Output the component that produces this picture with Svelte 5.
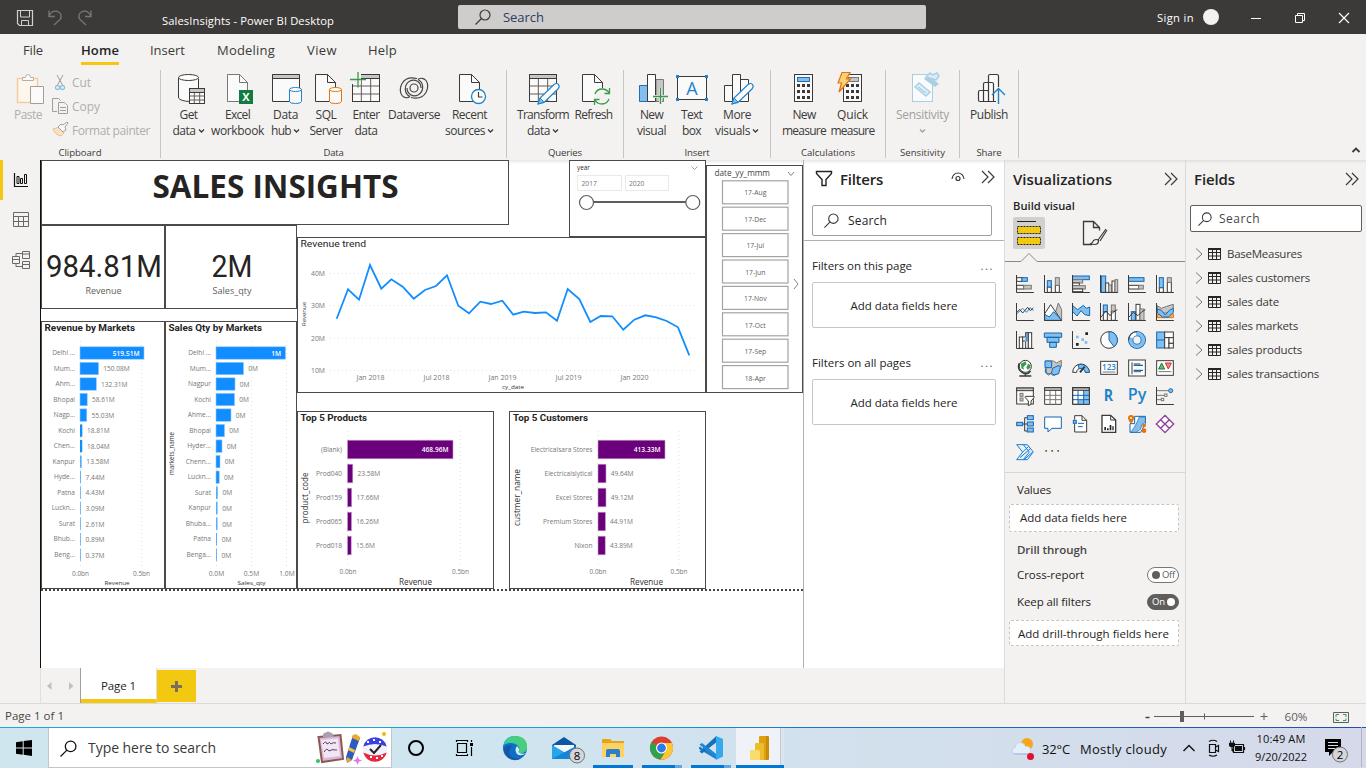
<script>
  // Spreads the letters of a label so that it takes exactly the given width.
  function fit(node, width) {
    const n = node.textContent.length;
    const natural = node.getBoundingClientRect().width;
    if (n && width) node.style.letterSpacing = `${(width - natural) / n}px`;
  }

  const page = (x, y, w = 21, h = 28, c = '#3b3a39') =>
    `<path d="M${x + .5} ${y + .5}h${w - 9}l8 8v${h - 9}h-${w - 1}z" fill="#fafafa" stroke="${c}"/><path d="M${x + w - 8.5} ${y + .5}v8h8" fill="none" stroke="${c}"/>`;
  const cyl = (x, y, w, h, c) =>
    `<path d="M${x + .5} ${y + 2.5}v${h - 5}q0 2 ${(w - 1) / 2} 2t${(w - 1) / 2} -2v-${h - 5}" fill="#fafafa" stroke="${c}"/><ellipse cx="${x + w / 2}" cy="${y + 2.5}" rx="${(w - 1) / 2}" ry="2" fill="#fff" stroke="${c}"/>`;
  const table = (x, y, w, h, c = '#3b3a39') =>
    `<rect x="${x + .5}" y="${y + .5}" width="${w - 1}" height="${h - 1}" fill="#fafafa"/><path d="M${x + w / 3} ${y + 4}v${h - 4}M${x + 2 * w / 3} ${y + 4}v${h - 4}M${x} ${y + 4 + (h - 4) / 3}h${w}M${x} ${y + 4 + 2 * (h - 4) / 3}h${w}" stroke="#605e5c" fill="none"/><rect x="${x + .5}" y="${y + .5}" width="${w - 1}" height="4" fill="#c8c6c4" stroke="${c}"/><rect x="${x + .5}" y="${y + .5}" width="${w - 1}" height="${h - 1}" fill="none" stroke="${c}"/>`;
  const pencil = (x, y) =>
    `<path d="M${x} ${y}l2-6 14-13.500q3-2 4.500 0t-.5 4.500l-14 13.500z" fill="#fafafa" stroke="#1f83c9" stroke-width="1.200"/><path d="M${x} ${y}l2-6 4 4z" fill="#83beec" stroke="#1f83c9"/>`;
  const dots = (x, y) => [0, 1, 2].map(r => [0, 1, 2].map(c => `<rect x="${x + c * 5}" y="${y + r * 6}" width="3" height="3" fill="#3b3a39"/>`).join('')).join('');

  const groups = [
    { name: 'Data', w: 346, pad: 6, x: 161, lw: 20, items: [
      { w: 43, l: ['Get', 18], m: ['data', 23], down: 1, icon: `<path d="M178.500 78v20q2 3 11 3.500v-13h9v-10" fill="#fafafa" stroke="#3b3a39"/><ellipse cx="188.500" cy="77.500" rx="10" ry="3" fill="#fff" stroke="#3b3a39"/>` + table(189, 88, 16, 16) },
      { w: 55, l: ['Excel', 25], m: ['workbook', 53], icon: page(227, 74, 21, 28, '#797775') + `<rect x="239" y="90" width="14" height="14" fill="#107c41"/><text x="246" y="101" text-anchor="middle" font-family="Open Sans" font-weight="700" font-size="11" fill="#fff">X</text>` },
      { w: 41, l: ['Data', 25], m: ['hub', 20], down: 1, icon: `<path d="M272.500 74.500h27v27h-27z" fill="#fafafa" stroke="#3b3a39"/><path d="M272.500 74.500h27v4h-27z" fill="#c8c6c4" stroke="#3b3a39"/>` + cyl(289, 87, 13, 17, '#1f83c9') },
      { w: 40, l: ['SQL', 21], m: ['Server', 33], icon: page(315, 74) + cyl(329, 87, 13, 17, '#e3740b') },
      { w: 40, l: ['Enter', 27], m: ['data', 23], icon: table(352, 74, 28, 28) + `<path d="M350 72h11v12h-11z" fill="#f3f2f1"/><path d="M350 79.500h16M358 72v15.500" stroke="#3a9a4b" stroke-width="1.300"/>` },
      { w: 56, l: ['Dataverse', 52], icon: `<g fill="none" stroke="#484644" stroke-width="1.200"><circle cx="414" cy="88" r="4"/><path d="M417 78.500c-6-1.500-12 0-15 5-2.500 4.500-2 9.500 0 12 2 2.500 5.500 3 8 1M411 97.500c6 1.500 12 0 15-5 2.500-4.500 2-9.500 0-12-2-2.500-5.500-3-8-1"/><path d="M410 96.500c-6-3-6.500-12 0-15.500 5-2.500 11 1 11 7M418 79.500c6 3 6.500 12 0 15.500-5 2.500-11-1-11-7"/></g>` },
      { w: 55, l: ['Recent', 35], m: ['sources', 40], down: 1, icon: page(459, 74) + `<circle cx="478.500" cy="96.500" r="7" fill="#fff" stroke="#1f83c9" stroke-width="1.300"/><path d="M478.500 92v5h4" fill="none" stroke="#3b3a39" stroke-width="1.200"/>` }
    ] },
    { name: 'Queries', w: 117, pad: 9, x: 507, lw: 34, items: [
      { w: 54, l: ['Transform', 52], m: ['data', 23], down: 1, icon: table(529, 74, 28, 28) + pencil(538, 104) },
      { w: 47, l: ['Refresh', 38], icon: page(582, 74) + `<circle cx="602" cy="96.500" r="8.500" fill="#f3f2f1"/><path d="M595 94q2-5 7-5t7 4m.5-5v5.500h-5M609 99q-2 5-7 5t-7-4m-.5 5v-5.500h5" fill="none" stroke="#3a9a4b" stroke-width="1.300"/>` }
    ] },
    { name: 'Insert', w: 147, pad: 7, x: 624, lw: 25, items: [
      { w: 41, l: ['New', 23], m: ['visual', 29], icon: `<path d="M656 79.500h7.500v22H656z" fill="#c8c6c4" stroke="#797775"/><path d="M639.500 85.500h8v16h-8z" fill="#83beec" stroke="#1f6fb5"/><path d="M647.500 74.500h8v27h-8z" fill="#fff" stroke="#3b3a39"/><path d="M660.500 88v16M653 96.500h15" stroke="#f3f2f1" stroke-width="3"/><path d="M660.500 88v16M653 96.500h15" stroke="#3a9a4b" stroke-width="1.400"/>` },
      { w: 39, l: ['Text', 21], m: ['box', 19], icon: `<rect x="677.500" y="76.500" width="29" height="23" fill="#fafafa" stroke="#3b3a39"/><path d="M676 75h3v3h-3zM705 75h3v3h-3zM676 98h3v3h-3zM705 98h3v3h-3z" fill="#1f83c9"/><text x="692" y="95" text-anchor="middle" font-family="Open Sans" font-size="18" fill="#1f83c9">A</text>` },
      { w: 52, l: ['More', 28], m: ['visuals', 35], down: 1, icon: `<g fill="#fafafa" stroke="#3b3a39"><path d="M724.500 85.500h8v16h-8zM732.500 74.500h8v27h-8zM740.500 79.500h8v22h-8z"/></g>` + pencil(732, 104) }
    ] },
    { name: 'Calculations', w: 115, pad: 9, x: 771, lw: 54, items: [
      { w: 48, l: ['New', 23], m: ['measure', 44], icon: `<rect x="794.500" y="74.500" width="18" height="27" fill="#fafafa" stroke="#3b3a39"/><rect x="797.500" y="77.500" width="12" height="4" fill="#83beec" stroke="#1f6fb5"/>` + dots(797, 84) },
      { w: 49, l: ['Quick', 31], m: ['measure', 44], icon: `<rect x="843.500" y="74.500" width="18" height="27" fill="#fafafa" stroke="#3b3a39"/><rect x="848.500" y="77.500" width="10" height="4" fill="#c8c6c4" stroke="#797775"/>` + dots(846, 84) + `<path d="M842 72.500h8l-3.500 6.500h4L839 92l2.500-9H838z" fill="#fbd17b" stroke="#e3740b" stroke-width="1.200"/>` }
    ] },
    { name: 'Sensitivity', w: 74, pad: 0, x: 886, lw: 45, items: [
      { w: 73, off: 1, l: ['Sensitivity', 53], m: ['', 0], down: 1, icon: `<rect x="912.500" y="74.500" width="20" height="27" fill="#fafafa" stroke="#a8cfe4"/><path d="M915 87l4-4 11 9-4 4z" fill="#e3f0f7" stroke="#a8cfe4" stroke-width="1.500"/><path d="M918 87l8 6" stroke="#a8cfe4" stroke-width="1.500"/><path d="M924 79l4-4 11 9-4 3z" fill="#a8cfe4"/><path d="M926 77l4-4 3 2 4-2 2 3-3 4z" fill="#dcecf4" stroke="#a8cfe4" stroke-width="1.500"/>` }
    ] },
    { name: 'Share', w: 59, pad: 0, x: 960, lw: 25, items: [
      { w: 58, l: ['Publish', 38], icon: `<g fill="#fafafa" stroke="#3b3a39" stroke-width="1.200"><path d="M988.500 101.500V76q0-1.500 1.500-1.500h7q1.500 0 1.500 1.500v25.500zM983.500 101.500V84q0-1.500 1.500-1.500h7q1.500 0 1.500 1.500v17.500zM978.500 100V92q0-1.500 1.500-1.500h7q1.500 0 1.500 1.500v9.500h-8.500q-1.500 0-1.500-1.500z"/></g><path d="M998.500 87v17" stroke="#f3f2f1" stroke-width="5"/><path d="M998.500 104V88.500M992 95l6.500-6.500 6.500 6.500" fill="none" stroke="#1f83c9" stroke-width="1.400"/>` }
    ] }
  ];
  for (const g of groups) {
    let x = g.x + g.pad;
    for (const i of g.items) { i.x = x; x += i.w; }
  }

  const menu = [['File', 20, 23], ['Home', 38, 38], ['Insert', 35, 31], ['Modeling', 58, 32], ['View', 30, 32], ['Help', 29, 31]];

  const market = [['Delhi ...', 519.51], ['Mum...', 150.08], ['Ahm...', 132.31], ['Bhopal', 58.61], ['Nagp...', 55.03], ['Kochi', 18.81], ['Chen...', 18.04], ['Kanpur', 13.58], ['Hyde...', 7.44], ['Patna', 4.43], ['Luckn...', 3.09], ['Surat', 2.61], ['Bhub...', 0.89], ['Beng...', 0.37]]
    .map(([n, v]) => ({ n, v: v + 'M', w: Math.max(.8, v * .1232) }));
  const qty = [['Delhi ...', 69.5], ['Mum...', 27.5], ['Nagpur', 19], ['Kochi', 18.5], ['Ahme...', 15], ['Bhopal', 8.5], ['Hyder...', 6], ['Chenn...', 4], ['Luckn...', 3.2], ['Surat', 1.8], ['Kanpur', 1.6], ['Bhuba...', 1.5], ['Patna', 1], ['Benga...', .9]]
    .map(([n, w], i) => ({ n, w, v: i ? '0M' : '1M' }));
  const products = [['(Blank)', '468.96M', 105.5], ['Prod040', '23.58M', 5.3], ['Prod159', '17.66M', 4.2], ['Prod065', '16.26M', 4], ['Prod018', '15.6M', 3.7]].map(([n, v, w]) => ({ n, v, w }));
  const customers = [['Electricalsara Stores', '413.33M', 67], ['Electricalslytical', '49.64M', 8], ['Excel Stores', '49.12M', 8], ['Premium Stores', '44.91M', 7.4], ['Nixon', '43.89M', 7.2]].map(([n, v, w]) => ({ n, v, w }));
  const trend = '336.7,318.7 348,289.3 359,299.7 370,265 381.3,288.7 391.3,279.3 402.7,286.7 413.7,298.7 425,290 436,286 447,275.3 458.3,305.7 469,313.3 480.3,301.7 491,304 502.3,300.7 513.3,314.7 523.7,311.7 535,313 546,312.3 557,320.7 567.7,289 579.3,299 590.3,322 600.7,316 612.3,316.3 623.3,329.7 634.3,319.7 645.3,315.3 656.3,317.3 666.7,321 678,327.3 689.3,355.3';
  const months = ['17-Aug', '17-Dec', '17-Jul', '17-Jun', '17-Nov', '17-Oct', '17-Sep', '18-Apr'];

  const K = '#3b3a39', B = '#83beec', D = '#1267b4', G = '#c8c6c4', S = '#797775';
  const r = (x, y, w, h, f, s) => `<rect x="${x}" y="${y}" width="${w}" height="${h}" fill="${f}" stroke="${s}"/>`;
  const axis = `<path d="M1.500 0v52.500h52" stroke="${K}"/>`;
  const tbl = `<path d="M2 2h50v50H2z" fill="#fff" stroke="${K}"/>`;
  const vizIcons = [
    r(2, 8, 16, 11, '#fff', K) + r(18, 8, 16, 11, B, D) + r(2, 31, 21, 11, '#fff', K) + r(23, 31, 23, 11, G, S) + axis,
    r(10, 36, 12, 16, '#fff', K) + r(10, 17, 12, 19, B, D) + r(34, 31, 12, 21, '#fff', K) + r(34, 8, 12, 23, G, S) + axis,
    r(2, 3, 50, 11, B, D) + r(2, 14, 30, 10, G, S) + r(2, 24, 20, 8, '#fff', K) + r(2, 32, 38, 10, G, S) + r(2, 42, 30, 8, '#fff', K) + axis,
    r(4, 3, 13, 49, B, D) + r(17, 24, 9, 28, '#fff', K) + r(26, 30, 10, 22, G, S) + r(36, 18, 9, 34, '#fff', K) + r(45, 14, 8, 38, G, S) + axis,
    r(2, 8, 46, 11, B, D) + r(2, 31, 30, 11, '#fff', K) + r(32, 31, 14, 11, G, S) + axis,
    r(10, 38, 12, 14, '#fff', K) + r(10, 8, 12, 30, B, D) + r(34, 22, 12, 30, '#fff', K) + r(34, 8, 12, 14, G, S) + axis,
    `<path d="M3 32l17-16 12 12 10-14 11 9" stroke="#2a8ad0"/><path d="M3 28l8-9 9 11 15-17 8 10 9-8" stroke="${K}"/>` + axis,
    `<path d="M28 50L43 0l10 20v30z" fill="${G}" stroke="${S}"/><path d="M2 32L20 5l32 46H2z" fill="#fff" stroke="${K}"/><path d="M2 52V34l14 8 13-16 24 26z" fill="${B}" stroke="${D}"/>` + axis,
    `<path d="M2 8l15 12L34 7l9 9 10-4v26l-15-3-11-12-12 16L2 26z" fill="${B}" stroke="${D}"/>` + axis,
    r(10, 26, 12, 26, '#fff', K) + r(10, 6, 12, 20, B, D) + r(34, 24, 12, 28, '#fff', K) + r(34, 6, 12, 18, G, S) + `<path d="M3 42l15-18 12 14 9-10 13-8" stroke="${K}" stroke-width="3"/>` + axis,
    r(10, 26, 12, 26, B, D) + r(24, 4, 12, 48, '#fff', K) + r(36, 18, 12, 34, G, S) + `<path d="M3 42l13-14 14 10 12-12 10-6" stroke="${K}" stroke-width="3"/>` + axis,
    `<path d="M4 8l12 8 16-6 20-6v14L38 30H18L4 20z" fill="${G}" stroke="${S}"/><path d="M4 34h12l8 8h12l8-10h8v12H4z" fill="#fbb35a" stroke="#e3740b"/><path d="M4 18l12 4 12 14 12-14 12-6v12L38 42H20L4 30z" fill="${B}" stroke="${D}"/>` + axis,
    r(10, 18, 10, 34, '#fff', K) + r(20, 18, 9, 12, '#fff', K) + r(29, 5, 8, 47, '#fff', K) + r(37, 5, 10, 47, '#fff', K) + `<path d="M26 18h7v14h-7z" fill="${B}"/><path d="M33 5v26" stroke="${D}"/>` + axis,
    `<g fill="${B}" stroke="${D}"><path d="M1 6h52v13H1zM9 19h36v15H9zM17 34h20v15H17z"/></g>`,
    `<path d="M12 14h8v8h-8zM38 30h8v8h-8zM28 22h8v8h-8z" fill="${B}"/><path d="M40 4h8v8h-8zM12 36h8v8h-8z" fill="#222"/>` + axis,
    `<circle cx="27" cy="27" r="25" fill="#fff" stroke="${K}"/><path d="M27 2a25 25 0 0 1 15 45L27 27z" fill="${B}" stroke="${D}"/>`,
    `<circle cx="27" cy="27" r="19" fill="none" stroke="${D}" stroke-width="16"/><circle cx="27" cy="27" r="19" fill="none" stroke="${B}" stroke-width="11"/><path d="M10 20a19 19 0 0 1 14-12" stroke="#fff" stroke-width="10"/><path d="M2 27A25 25 0 0 1 27 2" stroke="${K}"/>`,
    r(2, 3, 24, 48, B, D) + `<path d="M2 27h24" stroke="${D}"/>` + r(26, 3, 26, 17, '#fff', K) + r(26, 20, 13, 31, '#fff', K) + r(39, 20, 13, 17, '#fff', K) + r(39, 37, 13, 14, '#fff', K),
    `<circle cx="28" cy="22" r="18" fill="#fff" stroke="${K}"/><path d="M15 14l13-7 4 8-10 9 2 8-8-4zM36 14l7 4v8l-8 6-4-6z" fill="#3a9a4b"/><path d="M10 12q-8 18 8 28t26-4M28 44v7M10 51h36" stroke="${K}" stroke-width="4"/>`,
    `<path d="M4 6h24l10 6 14-8v18l-6 4-4 18-14 6-8-6H8z" fill="${G}" stroke="${S}"/><path d="M3 6h20v20H3zM26 28l16-8 8 2-6 22-14 4-8-6z" fill="${B}" stroke="${D}"/><path d="M4 28v12l10 8 8-6" stroke="${D}"/>`,
    `<path d="M2 40a25 25 0 0 1 50 0H40a13 13 0 0 0-26 0z" fill="#fff" stroke="${K}"/><path d="M18 18a25 25 0 0 1 34 22H40a13 13 0 0 0-18-11z" fill="${B}" stroke="${D}"/><path d="M24 40l14-17" stroke="${K}" stroke-width="6"/>`,
    r(2, 7, 50, 39, '#fff', K) + `<path d="M8 39h38" stroke="${S}"/><text x="27" y="34" text-anchor="middle" font-family="Open Sans" font-weight="600" font-size="26" textLength="42" lengthAdjust="spacingAndGlyphs" fill="#1f83c9">123</text>`,
    r(2, 3, 50, 48, '#fff', K) + `<path d="M12 10v36" stroke="${K}"/><path d="M17 15h20M17 38h22" stroke="${S}" stroke-width="4"/><path d="M17 19h28M17 34h28" stroke="${D}" stroke-width="4"/>`,
    r(2, 5, 50, 44, '#fff', K) + `<path d="M8 30l9-18 9 18z" fill="#6ab77a" stroke="#1e7b34"/><path d="M28 12h18l-9 18z" fill="#f08a8a" stroke="#d92c2c"/><path d="M8 38h38" stroke="${S}"/>`,
    r(2, 3, 50, 48, '#fff', K) + r(2, 3, 50, 8, G, K) + r(12, 19, 9, 9, G, S) + r(12, 33, 9, 9, G, S) + `<path d="M28 28h26v4l-9 10v10l-8 4V42l-9-10z" fill="#fff" stroke="${K}"/>`,
    tbl + `<path d="M18 10v42M35 10v42M2 25h50M2 38h50" stroke="${S}"/>` + r(2, 2, 50, 8, G, K),
    tbl + `<path d="M35 10h17v42H18V38h17z" fill="${B}"/><path d="M18 10v42M35 10v42M2 25h50M2 38h50" stroke="${D}"/>` + r(2, 2, 50, 8, G, K) + `<path d="M2 2h50v50H2z" stroke="${K}"/>`,
    `<text x="25" y="43" text-anchor="middle" font-family="Open Sans" font-weight="700" font-size="46" textLength="28" lengthAdjust="spacingAndGlyphs" fill="#1f83c9">R</text>`,
    `<text x="27" y="39" text-anchor="middle" font-family="Open Sans" font-weight="600" font-size="46" textLength="56" lengthAdjust="spacingAndGlyphs" fill="#1f83c9">Py</text>`,
    `<path d="M2 11h36M2 25h24M2 38h14" stroke="${S}"/><circle cx="44" cy="11" r="6" fill="${B}" stroke="${D}"/>` + r(26, 21, 7, 7, '#fff', S) + r(16, 34, 7, 7, '#fff', S) + axis,
    `<path d="M18 27h16M26 8v40M26 8h8M26 48h8" stroke="${K}"/>` + r(2, 22, 18, 10, B, D) + r(34, 2, 18, 12, B, D) + r(34, 21, 18, 12, B, D) + r(34, 39, 18, 12, B, D),
    `<path d="M2 6h50v34H24L12 51V40H2z" fill="#fff" stroke="${D}"/>`,
    `<path d="M8 14V2h22l14 14v35H8V26" fill="#fff" stroke="${K}"/><path d="M30 2v14h14" stroke="${K}"/><path d="M18 25h18M18 35h14" stroke="${D}"/>` + r(4, 16, 9, 9, B, D),
    `<path d="M6 1h26l15 14v37H6z" fill="#fff" stroke="${K}" stroke-width="4"/><path d="M32 1v14h15" stroke="${K}"/><path d="M13 36h5v10h-5zM21 40h5v6h-5zM29 30h5v16h-5zM37 34h4v12h-4z" fill="#222"/>`,
    `<path d="M6 26h14V4h32v22L38 52H6z" fill="#fff" stroke="${D}"/><path d="M34 6h18v16L42 28l-4 14-14 10H8l10-14 8-14z" fill="${B}" stroke="${D}" stroke-width="2"/><path d="M9 0q10 0 9 10-1 8-9 16Q1 18 0 10 0 0 9 0z" fill="#e3740b"/><circle cx="9" cy="9" r="3" fill="#fff"/><circle cx="48" cy="47" r="7" fill="#e3740b"/><path d="M43 27h10v9h-10z" fill="#e3740b"/>`,
    `<g fill="#fff" stroke="#8f3f9e"><path d="M27 1l13 13-13 13L14 14zM14 14l13 13-13 13L1 27zM40 14l13 13-13 13-13-13zM27 27l13 13-13 13-13-13z" stroke-width="4"/></g>`,
    `<path d="M2 5h32l18 22-18 23H2l18-23z" fill="#e6f1fb" stroke="#1a7bd0"/><path d="M22 5l18 22-18 23M20 27L38 10M12 44L44 16M24 50l25-22" stroke="#1a7bd0"/>`,
    `<path d="M4 21h5v5H4zM22 21h5v5h-5zM40 21h5v5h-5z" fill="#7d5a2c"/>`
  ];
  const fields = [['BaseMeasures', 75], ['sales customers', 83], ['sales date', 52], ['sales markets', 71], ['sales products', 75], ['sales transactions', 92]];

  const petals = '<circle cx="661.500" cy="748" r="11.500" fill="#de3f31"/><path d="M651.500 742.200A11.500 11.500 0 0 0 660 759.400l6.500-8.900z" fill="#2da24d"/><path d="M661.500 743H671.800A11.500 11.500 0 0 1 660.500 759.500L666.500 750z" fill="#fcc832"/><circle cx="661.500" cy="748" r="5.500" fill="#fff"/><circle cx="661.500" cy="748" r="4.400" fill="#2f78e8"/>';
</script>

{#snippet T(text, w)}<span class="t" use:fit={w}>{text}</span>{/snippet}

{#snippet ico(x, y, w, h, markup)}<svg class="ico" width={w} height={h} viewBox="{x} {y} {w} {h}" fill="none">{@html markup}</svg>{/snippet}

{#snippet st(x, y, text, size, w, anchor = 'start', fill = '#777', weight = 400, font = 'Open Sans')}
  <text {x} {y} font-size={size} textLength={w || undefined} lengthAdjust="spacingAndGlyphs" text-anchor={anchor} {fill} font-weight={weight} font-family="{font}, Open Sans, sans-serif">{text}</text>
{/snippet}

{#snippet bars(rows, x0, y0, pitch, h, fill, edge, labelX)}
  {#each rows as row, i}
    {@const cy = y0 + i * pitch}
    <rect x={x0} y={cy - h / 2} width={row.w} height={h} {fill} fill-opacity={row.w < 2 ? .7 : 1} stroke={row.w < 2.6 ? 'none' : edge} stroke-width=".6" />
    {@render st(labelX, cy + 2, row.n, 6.6, 0, 'end', '#777')}
    {#if i === 0}
      {@render st(x0 + row.w - 4.5, cy + 2.8, row.v, 6.6, 0, 'end', '#fff', 600)}
    {:else}
      {@render st(x0 + row.w + 4.7, cy + 2.8, row.v, 6.6, 0, 'start', '#777')}
    {/if}
  {/each}
{/snippet}

{#snippet visual(x, y, w, h, body)}
  <svg class="visual" style="left:{x - 40}px;top:{y - 160}px" width={w} height={h} viewBox="{x} {y} {w} {h}">
    <rect x={x + .5} y={y + .5} width={w - 1} height={h - 1} fill="#fff" stroke="#4b4a49" />
    {@render body()}
  </svg>
{/snippet}

{#snippet titleV()}{@render st(152.5, 198, 'SALES INSIGHTS', 32, 246, 'start', '#252423', 700)}{/snippet}
{#snippet revCard()}
  {@render st(46, 277, '984.81M', 31.5, 116, 'start', '#252423', 400, 'Roboto')}
  {@render st(103.5, 294, 'Revenue', 9.2, 36, 'middle', '#605e5c')}
{/snippet}
{#snippet qtyCard()}
  {@render st(211.5, 277, '2M', 31.5, 41, 'start', '#252423', 400, 'Roboto')}
  {@render st(232, 294, 'Sales_qty', 9.2, 39, 'middle', '#605e5c')}
{/snippet}
{#snippet marketV()}
  {@render st(44.5, 331, 'Revenue by Markets', 9.6, 90.5, 'start', '#252423', 700, 'Roboto')}
  <path d="M80.500 341v226M141.500 341v226" class="dots" />
  {@render bars(market, 80, 353, 15.52, 12.4, '#118dff', '#8ec9ff', 75)}
  {@render st(80.5, 576, '0.0bn', 6.6, 17, 'middle')}
  {@render st(141.5, 576, '0.5bn', 6.6, 17, 'middle')}
  {@render st(117, 585, 'Revenue', 6, 25, 'middle', '#333', 500)}
{/snippet}
{#snippet qtyV()}
  {@render st(168.5, 331, 'Sales Qty by Markets', 9.6, 93.5, 'start', '#252423', 700, 'Roboto')}
  <path d="M216.500 341v226M251.500 341v226M286.500 341v226" class="dots" />
  {@render bars(qty, 216, 353, 15.52, 12.4, '#118dff', '#8ec9ff', 211)}
  {@render st(216.5, 576, '0.0M', 6.6, 15.5, 'middle')}
  {@render st(251.5, 576, '0.5M', 6.6, 15.5, 'middle')}
  {@render st(287, 576, '1.0M', 6.6, 15.5, 'middle')}
  {@render st(251.5, 585, 'Sales_qty', 6, 28, 'middle', '#333', 500)}
  <g transform="rotate(-90 174 453.500)">{@render st(174, 453.5, 'markets_name', 6.2, 43, 'middle', '#333', 500)}</g>
{/snippet}
{#snippet trendV()}
  {@render st(300.5, 247, 'Revenue trend', 9.6, 65.5, 'start', '#252423', 400, 'Roboto')}
  <path d="M330 273.500h367M330 305.700h367M330 338.300h367M330 370.500h367" class="dots" />
  <polyline points={trend} fill="none" stroke="#118dff" stroke-width="1.800" />
  {#each ['40M', '30M', '20M', '10M'] as l, i}{@render st(325, 276 + i * 32.4, l, 6.8, 14, 'end')}{/each}
  {#each ['Jan 2018', 'Jul 2018', 'Jan 2019', 'Jul 2019', 'Jan 2020'] as l, i}{@render st(370.5 + i * 66, 380, l, 6.8, i % 2 ? 26 : 28, 'middle')}{/each}
  {@render st(513, 389, 'cy_date', 6, 22, 'middle', '#333', 500)}
  <g transform="rotate(-90 306 314)">{@render st(306, 314, 'Revenue', 6, 24, 'middle', '#444', 500)}</g>
{/snippet}
{#snippet yearV()}
  {@render st(577, 169.5, 'year', 6.2, 13, 'start', '#333', 500)}
  <path d="M691.500 166.500l3 3 3-3" fill="none" stroke="#888" stroke-width=".8" />
  <rect x="577.500" y="175.500" width="44" height="15" fill="#fff" stroke="#eae9e8" /><rect x="625.500" y="175.500" width="43" height="15" fill="#fff" stroke="#eae9e8" />
  {@render st(581.5, 186, '2017', 7, 15.5)}{@render st(629, 186, '2020', 7, 15.5)}
  <path d="M587 202h105" stroke="#605e5c" stroke-width="2" />
  <circle cx="586.500" cy="202.500" r="7" fill="#fff" stroke="#605e5c" stroke-width="1.200" /><circle cx="692.800" cy="202.500" r="7" fill="#fff" stroke="#605e5c" stroke-width="1.200" />
{/snippet}
{#snippet dateV()}
  {@render st(714.5, 176, 'date_yy_mmm', 8.6, 55.5, 'start', '#444')}
  <path d="M788 172l3 3.500 3-3.500M794 279l4 5-4 5" fill="none" stroke="#777" stroke-width=".9" />
  {#each months as m, i}
    <rect x="722.500" y={180.8 + i * 26.4} width="65.500" height="23" fill="#fff" stroke="#a6a4a2" stroke-width="1.200" />
    {@render st(755.3, 195 + i * 26.5, m, 6.8, 0, 'middle', '#605e5c')}
  {/each}
{/snippet}
{#snippet productV()}
  {@render st(300.5, 421, 'Top 5 Products', 9.6, 66.5, 'start', '#252423', 700, 'Roboto')}
  <path d="M347.800 431v134M460.500 431v134" class="dots" />
  {@render bars(products, 347.5, 449.5, 24, 18.6, '#6b007b', '#c79bce', 342)}
  {@render st(348, 574, '0.0bn', 6.6, 17, 'middle')}{@render st(460.5, 574, '0.5bn', 6.6, 17, 'middle')}
  {@render st(415.5, 585, 'Revenue', 8.4, 33, 'middle', '#333')}
  <g transform="rotate(-90 308 498)">{@render st(308, 498, 'product_code', 8.4, 51, 'middle', '#333')}</g>
{/snippet}
{#snippet customerV()}
  {@render st(513, 421, 'Top 5 Customers', 9.6, 75, 'start', '#252423', 700, 'Roboto')}
  <path d="M598 431v134M679 431v134" class="dots" />
  {@render bars(customers, 598, 449.5, 24, 18.6, '#6b007b', '#c79bce', 592.5)}
  {@render st(598, 574, '0.0bn', 6.6, 17, 'middle')}{@render st(679, 574, '0.5bn', 6.6, 17, 'middle')}
  {@render st(646.5, 585, 'Revenue', 8.4, 33, 'middle', '#333')}
  <g transform="rotate(-90 519.500 497.500)">{@render st(519.5, 497.5, 'custmer_name', 8.4, 57, 'middle', '#333')}</g>
{/snippet}

{#snippet chevrons()}<svg class="ico" width="14" height="14" viewBox="0 0 14 14" fill="none"><path d="M1 1l6 6-6 6M7 1l6 6-6 6" stroke="#3b3a39" stroke-width="1.200" /></svg>{/snippet}
{#snippet lens(size, c)}<svg class="ico" width={size} height={size} viewBox="0 0 16 16" fill="none"><circle cx="10" cy="6" r="5" stroke={c} stroke-width="1.200" /><path d="M6.500 9.500L.5 15.500" stroke={c} stroke-width="1.200" /></svg>{/snippet}

<div class="app">
  <header class="titlebar">
    <div class="quick">
      {@render ico(16, 9, 80, 18, `<path d="M17.500 10.500h15v15H19.500l-2-2z" stroke="#d2d0ce" stroke-width="1.200"/><path d="M20.500 11v6h9v-6M21.500 25v-4.500h7V25" stroke="#d2d0ce"/><path d="M49 10.500v6h6M49 16q3-6 8.500-4.500 5 2 3 7.500L54 25" stroke="#797775" stroke-width="1.300"/><path d="M91 10.500v6h-6M91 16q-3-6-8.500-4.500-5 2-3 7.500L86 25" stroke="#797775" stroke-width="1.300"/>`)}
    </div>
    <div class="doc">{@render T('SalesInsights - Power BI Desktop', 172)}</div>
    <div class="topsearch">{@render lens(16, '#3b3a39')}{@render T('Search', 41)}</div>
    <div class="sign">{@render T('Sign in', 37)}<i class="avatar"></i></div>
    <div class="win">{@render ico(1250, 10, 104, 16, `<path d="M1251 18.500h10" stroke="#fff"/><path d="M1295.500 15.500h7v7h-7zM1297.500 15v-1.500h7v7H1303" stroke="#fff"/><path d="M1339 13l10 10M1349 13l-10 10" stroke="#fff" stroke-width="1.200"/>`)}</div>
  </header>

  <nav class="tabs">
    {#each menu as [name, w, gap]}
      <div class="tab" class:on={name === 'Home'} style="margin-left:{gap}px;width:{w}px">{@render T(name, w)}</div>
    {/each}
  </nav>

  <section class="ribbon">
    <div class="group clip">
      <div class="cliprow">
        <div class="paste">
          {@render ico(14, 70, 32, 37, `<path d="M17.500 78.500h20v24h-20z" fill="#fdf6ea" stroke="#f3cda2" stroke-width="1.500"/><path d="M22.500 80.500v-3h3q0-3 2.500-3t2.500 3h3v3z" fill="#fafafa" stroke="#b3b0ad"/><path d="M30.500 86.500h13v17h-13z" fill="#fafafa" stroke="#a19f9d"/>`)}
          {@render T('Paste', 28)}
        </div>
        <div class="cliplist">
          <div>{@render ico(52, 73, 20, 18, `<path d="M57 75l6 11M63 75l-6 11" stroke="#a19f9d"/><circle cx="57.500" cy="87.500" r="2" stroke="#8fc3e3" stroke-width="1.300"/><circle cx="62.500" cy="87.500" r="2" stroke="#8fc3e3" stroke-width="1.300"/>`)}{@render T('Cut', 19)}</div>
          <div>{@render ico(52, 97, 20, 18, `<path d="M57 111.500h-4.500v-13h6l2 2" stroke="#a19f9d"/><path d="M58.500 102.500h6l3 3v8h-9zM60 107.500h6M60 110.500h6" stroke="#a19f9d"/>`)}{@render T('Copy', 28)}</div>
          <div>{@render ico(52, 121, 20, 18, `<path d="M53 129l6-2 5 6-3 3q-6-1-8-7z" fill="#f9dfc3" stroke="#efbf93"/><path d="M58 127l5 5 3-2-1-3 3-4-1-1-4 3-2-1z" fill="#fafafa" stroke="#a19f9d"/>`)}{@render T('Format painter', 78)}</div>
        </div>
      </div>
      <div class="gname">{@render T('Clipboard', 43)}</div>
    </div>
    {#each groups as g}
      <div class="group" style="width:{g.w}px">
        <div class="btns" style="padding-left:{g.pad}px">
          {#each g.items as b}
            <div class="btn" class:off={b.off} style="width:{b.w}px">
              {@render ico(b.x, 70, b.w, 37, b.icon)}
              <div class="bl">{@render T(b.l[0], b.l[1])}</div>
              {#if b.m}
                <div class="bl">{#if b.m[0]}{@render T(b.m[0], b.m[1])}{/if}{#if b.down}<svg class="ico" width="7" height="6" viewBox="0 0 7 6" fill="none"><path d="M1 1.500l2.500 2.500L6 1.500" stroke={b.off ? '#a19f9d' : '#3b3a39'} stroke-width="1.300" /></svg>{/if}</div>
              {/if}
            </div>
          {/each}
        </div>
        <div class="gname">{@render T(g.name, g.lw)}</div>
      </div>
    {/each}
    <svg class="ico collapse" width="10" height="8" viewBox="0 0 10 8" fill="none"><path d="M1.500 6L5 2.500 8.500 6" stroke="#3b3a39" stroke-width="1.800" /></svg>
  </section>

  <main>
    <aside class="rail">
      <div class="railitem on">{@render ico(8, 170, 24, 20, `<path d="M14.500 174v13.500H28" stroke="#111" stroke-width="1.200"/><path d="M17 177.500h2v7h-2zM20.500 179.500h2v5h-2zM24.500 175.500h2v9h-2z" stroke="#111"/>`)}</div>
      <div class="railitem">{@render ico(8, 209, 24, 22, `<path d="M13.500 212.500h15v14h-15zM13.500 216.500h15M13.500 221.500h15M18.500 216v10M23.500 216v10" stroke="#6b6967"/>`)}</div>
      <div class="railitem">{@render ico(8, 249, 24, 22, `<path d="M12.500 256.500h7v7h-7zM12.500 259.500h7M22.500 251.500h7v7h-7zM22.500 254h7M22.500 261.500h7v7h-7zM22.500 264.500h7M16 256v-2.500h6M16 264v2.500h6" stroke="#6b6967"/>`)}</div>
    </aside>

    <div class="center">
      <div class="upper">
        <div class="canvas">
          {@render visual(41, 160, 468, 65, titleV)}
          {@render visual(41, 225, 124, 84, revCard)}
          {@render visual(165, 225, 132, 84, qtyCard)}
          {@render visual(41, 321, 124, 268, marketV)}
          {@render visual(165, 321, 132, 268, qtyV)}
          {@render visual(297, 237, 409, 156, trendV)}
          {@render visual(569, 160, 137, 77, yearV)}
          {@render visual(706, 165, 97, 228, dateV)}
          {@render visual(297, 411, 197, 178, productV)}
          {@render visual(509, 411, 197, 178, customerV)}
          <div class="pageend"></div>
        </div>

        <section class="filters">
          <div class="phead fh">
            {@render ico(815, 171, 18, 18, `<path d="M816.500 172.500h15v2l-5.500 6v6h-4v-6l-5.500-6z" stroke="#252423" stroke-width="1.400"/>`)}
            <b class="fname">{@render T('Filters', 43)}</b>
            {@render ico(950, 173, 16, 12, `<path d="M952 179q1-6 6-6t6 6" stroke="#3b3a39" stroke-width="1.200"/><circle cx="958" cy="178.500" r="2" stroke="#3b3a39" stroke-width="1.200"/>`)}
            <span class="fchev">{@render chevrons()}</span>
          </div>
          <div class="search fsearch">{@render lens(15, '#3b3a39')}{@render T('Search', 39)}</div>
          <div class="fsect">
            <div class="flabel">{@render T('Filters on this page', 100)}<em>...</em></div>
            <div class="fbox">{@render T('Add data fields here', 107)}</div>
            <div class="flabel second">{@render T('Filters on all pages', 99)}<em>...</em></div>
            <div class="fbox">{@render T('Add data fields here', 107)}</div>
          </div>
        </section>
      </div>
      <div class="pagetabs">
        <div class="arrows">{@render ico(41, 670, 39, 32, `<path d="M51.500 682v8l-4.500-4zM69 682v8l4.500-4z" fill="#c2c0be"/>`)}</div>
        <div class="ptab">{@render T('Page 1', 35)}</div>
        <div class="add">{@render ico(157, 670, 39, 32, `<path d="M176.500 681v11M171 686.500h11" stroke="#77705c" stroke-width="3"/>`)}</div>
      </div>
    </div>

    <section class="viz">
      <div class="phead"><b>{@render T('Visualizations', 99)}</b>{@render chevrons()}</div>
      <div class="build">{@render T('Build visual', 62)}</div>
      <div class="modes">
        <div class="mode on">{@render ico(1013, 217, 32, 32, `<path d="M1017 221.500h19" stroke="#252423"/><path d="M1017.500 226.500h23v7h-23zM1017.500 237.500h23v7h-23z" fill="#f2c811" stroke="#252423" stroke-dasharray="2 1"/>`)}</div>
        <div class="mode">{@render ico(1079, 217, 32, 32, `<path d="M1092 244.500h-8.500v-23h10l6 6v3M1093.500 221.500v6h6" stroke="#3b3a39" fill="none" stroke-width="1.300"/><path d="M1106 229l-8 11M1107 230l-7 11" stroke="#3b3a39" stroke-width="1.200"/><path d="M1090 244q3-1 3.500-3.500 3-2 5 0 0 4-4 4z" stroke="#3b3a39" stroke-width="1.200"/>`)}</div>
      </div>
      {@render ico(1005, 253, 180, 10, `<path d="M1005 261.500h16l8-8 8 8h148" stroke="#8a8886"/>`)}
      <div class="vgrid">
        {#each vizIcons as v}<svg width="18" height="18" viewBox="0 0 54 54" fill="none" stroke-width="3">{@html v.replaceAll('<text', '<text stroke="none"')}</svg>{/each}
      </div>
      <div class="vsect">
        <div class="vl values">{@render T('Values', 34)}</div>
        <div class="dash">{@render T('Add data fields here', 107)}</div>
        <div class="vl thr"><b>{@render T('Drill through', 70)}</b></div>
        <div class="vl row">{@render T('Cross-report', 67)}<span class="tog"><i></i>{@render T('Off', 13)}</span></div>
        <div class="vl row">{@render T('Keep all filters', 74)}<span class="tog on">{@render T('On', 13)}<i></i></span></div>
        <div class="dash drill">{@render T('Add drill-through fields here', 151)}</div>
      </div>
    </section>

    <section class="fields">
      <div class="phead"><b>{@render T('Fields', 41)}</b>{@render chevrons()}</div>
      <div class="search dark">{@render lens(14, '#3b3a39')}{@render T('Search', 41)}</div>
      <div class="flist">
        {#each fields as [name, w]}
          <div class="frow">
            <svg class="ico" width="8" height="12" viewBox="0 0 8 12" fill="none"><path d="M1 .5L7 6 1 11.500" stroke="#797775" /></svg>
            <svg class="ico" width="13" height="12" viewBox="0 0 13 12" fill="none"><path d="M.5.500h12v11H.5zM.5 4.500h12M.5 8h12M4.500 2v10M8.500 2v10" stroke="#252423" /><path d="M0 0h13v2H0z" fill="#252423" /></svg>
            {@render T(name, w)}
          </div>
        {/each}
      </div>
    </section>
  </main>

  <footer class="status">
    {@render T('Page 1 of 1', 59)}
    {@render ico(1144, 705, 208, 20, `<path d="M1145.500 716.500h4" stroke="#444" stroke-width="1.500"/><path d="M1154 715.500h100" stroke="#605e5c"/><path d="M1204.500 712.500v6" stroke="#605e5c"/><path d="M1180 710h4v11h-4z" fill="#605e5c"/><path d="M1260.500 715.500h7M1264 712v7" stroke="#605e5c"/><text x="1284.500" y="720" font-family="Open Sans" font-size="11.500" textLength="23" lengthAdjust="spacingAndGlyphs" fill="#605e5c">60%</text><path d="M1333.500 711.500h15v10h-15z" stroke="#605e5c"/><path d="M1336 716v-2.500h3M1343 713.500h3v2.500M1336 717.500v2h3M1343 719.500h3v-2" stroke="#3a9a4b"/>`)}
  </footer>

  <div class="taskbar">
    <div class="start">{@render ico(0, 729, 48, 39, `<path d="M16 742.300l6.700-1v6.200H16zM23.700 741.100l8.300-1.100v7.500h-8.300zM16 748.500h6.700v6.200l-6.700-1zM23.700 748.500H32v7.500l-8.300-1.200z" fill="#000"/>`)}</div>
    <div class="tsearch">
      {@render lens(17, '#111')}{@render T('Type here to search', 128)}
      {@render ico(314, 730, 76, 36, `<path d="M318.500 737l22-2 2.500 24-21 3z" fill="#d9b8d8" stroke="#8c5a52" stroke-width="2"/><path d="M321 740l17-1.500 2 17.500-16 2z" fill="#f2e6f6"/><path d="M323 735.500q0-3 3-3 2-2 4 0 3-.5 3 2.500l1 2-11 .5z" fill="#a99fb0"/><path d="M323 744q3-4 4 0 3-3 4 0 2-2 5-1M324 752q3-5 5-1 2-2 8-1" stroke="#54435c"/><circle cx="318" cy="761" r="2" fill="#33c35c"/><path d="M353 735l7 3-8 22-5 3-1-6z" fill="#2d5cc0"/><path d="M353 735l3-1 4 3-1 4-7-3z" fill="#f4a926"/><path d="M349 747l6 3-1 3-6-3z" fill="#f4c23c"/><path d="M347 757l5 3-5 3z" fill="#f0a12a"/><path d="M357.500 756l1.300 3.200 3.200 1.300-3.200 1.300-1.300 3.200-1.300-3.200-3.200-1.300 3.200-1.300z" fill="#d979e9"/><circle cx="375" cy="749.500" r="12" fill="#f3f1fb"/><path d="M363.300 746.500a12 12 0 0 1 23.400 0q-11.700-5-23.400 0z" fill="#3b3fe0"/><path d="M363.300 752.500a12 12 0 0 0 23.400 0q-11.700 6-23.400 0z" fill="#e8263c"/><path d="M367 742h2M373 740h2M379 742h2M370 757h2M376 758h2M381 756h2" stroke="#fff" stroke-width="2"/><path d="M370 749l4 4 7-8" stroke="#222" stroke-width="2"/><circle cx="384" cy="734" r="2" fill="#f9b208"/>`)}
    </div>
    {@render ico(392, 729, 344, 39, `<circle cx="416" cy="748" r="7" stroke="#000" stroke-width="2"/>
      <path d="M457.500 743.500h9v9h-9zM457 740.500h10M457 755.500h10M456.500 740v2M467.500 740v2M456.500 754v2M467.500 754v2M471.500 740v2M471.500 747v9" stroke="#000" stroke-width="1.200"/><path d="M470 743h3v3h-3z" fill="#000"/>
      <circle cx="515" cy="748" r="12" fill="#0f6fc4"/><path d="M503.500 745q2-9 11.500-9 12 1 12 11 0 7-9 6 4-4-1-8-6-4-13.500 0z" fill="#35c6b0"/><path d="M515 736q12 0 12 11 0 5-5 6-4 0-4-1.500 3-4-1-7.500-4-4-11-1 3-7 9-7z" fill="#55d35e" opacity=".6"/><path d="M512 746q-4 3-2 9 3 5 11 3-4 4-11 1-7-5-6-10 3-5 8-3z" fill="#1a4e9c" opacity=".7"/><path d="M517 746q4 4 1 6 3 3 8 1-5 4-9 1-3-4 0-8z" fill="#d9edf5"/>
      <path d="M552 745l12-8 12 8v14h-24z" fill="#0f57a5"/><path d="M554 745h20v8l-10 5-10-6z" fill="#f5f8fa"/><path d="M552 745l24 14h-24z" fill="#27a5ea"/><path d="M576 746v13h-24z" fill="#1684d8"/><circle cx="577" cy="755.500" r="7.500" fill="#d4d6d9" stroke="#6e7275"/><text x="577" y="760" text-anchor="middle" font-family="Open Sans" font-size="11.500" fill="#000">8</text>
      <path d="M602 740q0-1 1-1h7l2 2h11q1 0 1 1v13h-22z" fill="#e8a317"/><path d="M602 743h22v14h-22z" fill="#fdd261"/><path d="M606 757v-6q0-2 2-2h10q2 0 2 2v6h-4v-3h-6v3z" fill="#2b7fc8"/>
      ${petals}
      <path d="M716.500 736l-13.500 13-3-2.500-1 1v1.500l17.500 10.500 0-5-8-6.500 8-6z" fill="#1d7dc4"/><path d="M699.500 751.500l17-15.500v6l-14.500 11.500z" fill="#1373ba"/><path d="M699.500 744.500l2.500-1.500 14.500 11.500v5z" fill="#1c87d2"/><path d="M716 736l7 3v17.500l-7 3.500z" fill="#36a8ee"/>
      <path d="M593 765h40v3h-40zM642 765h33v3h-33zM691 765h33v3h-33z" fill="#0078d7"/><path d="M675 765h7v3h-7zM724 765h7v3h-7z" fill="#5fa9e2"/>`)}
    <div class="active">{@render ico(736, 729, 48, 39, `<path d="M760 736h8q1 0 1 1v22q0 1-1 1h-8z" fill="#c98b08"/><path d="M759 737q0-1 1-1h6v24h-7z" fill="#dda20f"/><path d="M755 744q0-1 1-1h7q1 0 1 1v16h-9z" fill="#edbd2c"/><path d="M750 751q0-1 1-1h7q2 0 2 2v8h-9q-1 0-1-1z" fill="#f8dc6d"/><path d="M780.500 728v40" stroke="#c2cbd5"/><path d="M736 765h48v3h-48z" fill="#0078d7"/>`)}</div>
    <div class="tray">
      {@render ico(1010, 735, 26, 28, `<circle cx="1027" cy="744" r="6" fill="#f9a51a"/><path d="M1015 754q-3 0-3-3t3-3.500q1-5 5-5t5.500 4q5-.5 5 4 0 3.500-3 3.500z" fill="#e5eefb" stroke="#c3d2ea"/><path d="M1013 753h16q-1 2-3 2h-10z" fill="#b7c7e8"/><circle cx="1030.500" cy="756.500" r="3.500" fill="#e0112b"/>`)}
      <span class="temp">{@render T('32°C', 28)}</span>
      <span class="cloud">{@render T('Mostly cloudy', 87)}</span>
      {@render ico(1180, 735, 68, 28, `<path d="M1183.500 751l5.500-5.500 5.500 5.500" stroke="#111" stroke-width="1.400"/><path d="M1209.500 744.500h6v8h-6zM1215.500 747l3-1.500v6l-3-1.500M1209 741.500q4-2.500 8 0M1209 755q4 2.500 8 0" stroke="#111" stroke-width="1.200"/><path d="M1233.500 744.500h10v8h-10zM1244.500 747v3" stroke="#111" stroke-width="1.200"/><path d="M1235 746h7v5h-7z" fill="#111"/><path d="M1229.500 743h5v3q-2.500 2.500-5 0zM1230.500 740.500v2M1233.500 740.500v2M1232 748v3h2" fill="#111" stroke="#111"/>`)}
      <div class="clock"><span>{@render T('10:49 AM', 49)}</span><span>{@render T('9/20/2022', 52)}</span></div>
      {@render ico(1320, 733, 46, 34, `<path d="M1325 740h16v13h-8l-4 4v-4h-4z" fill="#000"/><path d="M1328 743.500h10M1328 746.500h10M1328 749.500h7" stroke="#d6dcea"/><circle cx="1340" cy="755.500" r="7.500" fill="#d4d6d9" stroke="#6e7275"/><text x="1340" y="760" text-anchor="middle" font-family="Open Sans" font-size="11.500" fill="#000">2</text><path d="M1361.500 728v40" stroke="#aeb5c2"/>`)}
    </div>
  </div>
</div>

<style>
  :global(body) { margin: 0; overflow: hidden; }
  .app { width: 1366px; height: 768px; overflow: hidden; display: flex; flex-direction: column; font: 12px/16px 'Open Sans', 'Noto Sans', sans-serif; color: #252423; background: #f3f2f1; }
  .app, .app :global(*) { box-sizing: border-box; }
  .t { white-space: pre; display: inline-block; }
  .ico { display: block; flex: none; overflow: visible; }
  b { font-weight: 600; }

  .titlebar { height: 34px; flex: none; background: #3b3a39; color: #fff; display: flex; font-size: 11.2px; }
  .quick { width: 162px; padding: 9px 0 0 16px; }
  .doc { width: 296px; padding-top: 13px; }
  .topsearch { width: 468px; height: 24px; margin-top: 5px; background: #cfcdcb; border-radius: 2px; display: flex; align-items: center; gap: 12px; padding-left: 17px; color: #2a3d5c; font-size: 13px; }
  .sign { width: 324px; padding-left: 230px; display: flex; gap: 10px; padding-top: 9px; }
  .sign .t { margin: 1px -1px 0 1px; }
  .avatar { width: 16px; height: 16px; border-radius: 50%; background: #f3f2f1; }
  .win { padding-top: 10px; }

  .tabs { height: 34px; flex: none; display: flex; font-size: 13px; color: #3b3a39; }
  .tab { height: 31px; padding-top: 8px; }
  .tab.on { font-weight: 600; border-bottom: 3px solid #f2c811; color: #252423; }

  .ribbon { height: 92px; flex: none; display: flex; padding-top: 2px; color: #3b3a39; }
  .group { height: 88px; flex: none; border-right: 1px solid #c8c6c4; display: flex; flex-direction: column; }
  .clip { width: 161px; }
  .cliprow { display: flex; height: 75px; flex: none; color: #b0aeac; }
  .paste { width: 52px; padding-left: 14px; }
  .cliplist > div { height: 24px; display: flex; align-items: center; }
  .cliplist .t { padding-top: 1px; }
  .btns { display: flex; height: 75px; flex: none; }
  .btn.off { color: #a19f9d; }
  .bl { height: 16px; display: flex; justify-content: center; align-items: center; gap: 2px; }
  .gname { font-size: 9.600px; line-height: 16px; text-align: center; height: 16px; flex: none; }
  .collapse { margin: 76px 5px 0 auto; }

  main { height: 543px; flex: none; display: flex; }
  .rail { width: 40px; }
  .railitem { height: 40px; padding: 9px 0 0 8px; border-left: 0 solid #f2c811; }
  .railitem.on { border-left-width: 3px; padding-left: 5px; }
  .center { width: 964px; display: flex; flex-direction: column; }
  .upper { height: 508px; display: flex; }
  .canvas { width: 763px; position: relative; background: linear-gradient(#e8e7e6, #fff 4px); border-left: 1px solid #111; }
  .visual { position: absolute; display: block; margin-left: -1px; overflow: visible; }
  .dots { fill: none; stroke: #dddbd9; stroke-width: .8; stroke-dasharray: 1 3; }
  .pageend { position: absolute; left: 0; right: 0; top: 429px; border-top: 2px dotted #444; }

  .filters { width: 201px; background: linear-gradient(#e8e7e6, #fff 4px); border-left: 1px solid #b3b0ad; }
  .phead { height: 38px; display: flex; justify-content: space-between; align-items: center; padding: 0 7px 0 8px; font-size: 15px; }
  .fh { justify-content: flex-start; padding-left: 11px; height: 37px; }
  .fname { width: 110px; margin-left: 7px; }
  .fchev { margin-left: 15px; margin-top: -4px; }
  .search { display: flex; align-items: center; background: #fff; border: 1px solid #a19f9d; border-radius: 2px; font-size: 12px; }
  .fsearch { width: 180px; height: 31px; margin: 8px 0 0 8px; padding-left: 11px; gap: 9px; }
  .fsect { margin-top: 4px; border-top: 1px solid #b3b0ad; padding: 17px 8px 0; font-size: 11.500px; }
  .flabel { height: 24px; display: flex; justify-content: space-between; padding-right: 2px; }
  .flabel em { font-style: normal; letter-spacing: 1.500px; color: #605e5c; }
  .flabel.second { margin-top: 27px; }
  .fbox { width: 184px; height: 46px; border: 1px solid #c8c6c4; border-radius: 2px; display: flex; align-items: center; justify-content: center; padding-top: 2px; }

  .pagetabs { height: 35px; display: flex; border-left: 1px solid #e1dfdd; }
  .arrows { width: 40px; padding-top: 2px; border-right: 1px solid #a19f9d; }
  .ptab { width: 76px; background: #fff; border-bottom: 4px solid #f2c811; font-size: 11.500px; padding: 10px 0 0 20px; border-right: 1px solid #ddd; }
  .add { margin-top: 2px; width: 39px; height: 32px; background: #f2c811; }

  .viz { width: 181px; border-left: 1px solid #dcdad8; display: flex; flex-direction: column; background: linear-gradient(#e2e0df, #f3f2f1 4px); }
  .build { font-weight: 600; font-size: 11.200px; height: 19px; padding-left: 8px; }
  .modes { height: 36px; display: flex; gap: 34px; padding-left: 8px; }
  .mode { width: 32px; height: 32px; border-radius: 2px; }
  .mode.on { background: #d2d0ce; }
  .vgrid { display: grid; grid-template-columns: repeat(6, 18px); gap: 10px; padding: 12px 0 0 11px; height: 209px; align-content: start; }
  .vgrid svg { display: block; overflow: visible; }
  .vsect { border-top: 1px solid #d8d6d4; padding: 9px 6px 0 4px; font-size: 11.500px; }
  .vl { height: 27px; padding-left: 8px; }
  .values { height: 22px; }
  .dash { width: 170px; height: 28px; margin-bottom: 10px; background: #fff; border: 1px dashed #c8c6c4; border-radius: 2px; padding: 5px 0 0 10px; }
  .thr { height: 25px; color: #484644; }
  .drill { padding: 5px 0 0 8px; height: 26px; margin-top: -1px; }
  .row { display: flex; justify-content: space-between; }
  .tog { width: 32px; height: 16px; border: 1px solid #797775; border-radius: 8px; background: #fff; display: flex; align-items: center; justify-content: space-between; padding: 0 3px 0 4px; font-size: 9.500px; color: #605e5c; }
  .tog i { width: 8px; height: 8px; border-radius: 50%; background: #605e5c; }
  .tog.on { background: #605e5c; border-color: #605e5c; color: #fff; }
  .tog.on i { background: #fff; }

  .fields { width: 181px; border-left: 1px solid #dcdad8; background: linear-gradient(#e2e0df, #f3f2f1 4px); }
  .search.dark { width: 172px; height: 27px; margin: 7px 0 0 4px; border-color: #605e5c; padding-left: 7px; gap: 7px; }
  .search.dark .t { padding-top: 1px; color: #484644; }
  .flist { padding: 10px 0 0 9px; font-size: 11.500px; color: #3b3a39; }
  .frow { height: 24px; display: flex; align-items: center; }
  .frow .ico + .ico { margin: 0 6px 0 5px; }

  .status { height: 24px; flex: none; border-top: 1px solid #dcdad8; display: flex; justify-content: space-between; align-items: center; padding: 0 14px 0 5px; font-size: 11.500px; color: #484644; }

  .taskbar { height: 41px; flex: none; display: flex; padding-top: 1px; border-top: 1px solid; border-image: linear-gradient(90deg, #18a9e0, #12a0df 45%, #1675c8 60%, #1f4fae) 1; background: linear-gradient(90deg, #d0e6ee, #cfe5ef 35%, #d2e1ed 60%, #d5d9e9); color: #111; }
  .start { width: 48px; }
  .tsearch { width: 344px; margin-top: -1px; padding-top: 1px; background: #fff; border: 1px solid #c0c6ca; border-top: 0; display: flex; align-items: center; padding-left: 11px; font-size: 14px; color: #3b3a39; }
  .tsearch .t { margin: 0 98px 0 11px; }
  .active { width: 48px; margin-top: -1px; padding-top: 1px; background: linear-gradient(90deg, #eff3f8 45px, #dbe5ef 45px); }
  .tray { width: 356px; margin-left: auto; display: flex; align-items: center; font-size: 13px; }
  .temp { width: 38px; padding-left: 6px; }
  .cloud { width: 106px; padding-left: 6px; }
  .temp .t, .cloud .t { margin-top: 1px; }
  .clock { width: 72px; display: flex; flex-direction: column; align-items: center; font-size: 11px; line-height: 18px; padding: 0 6px 2px 0; }
</style>
